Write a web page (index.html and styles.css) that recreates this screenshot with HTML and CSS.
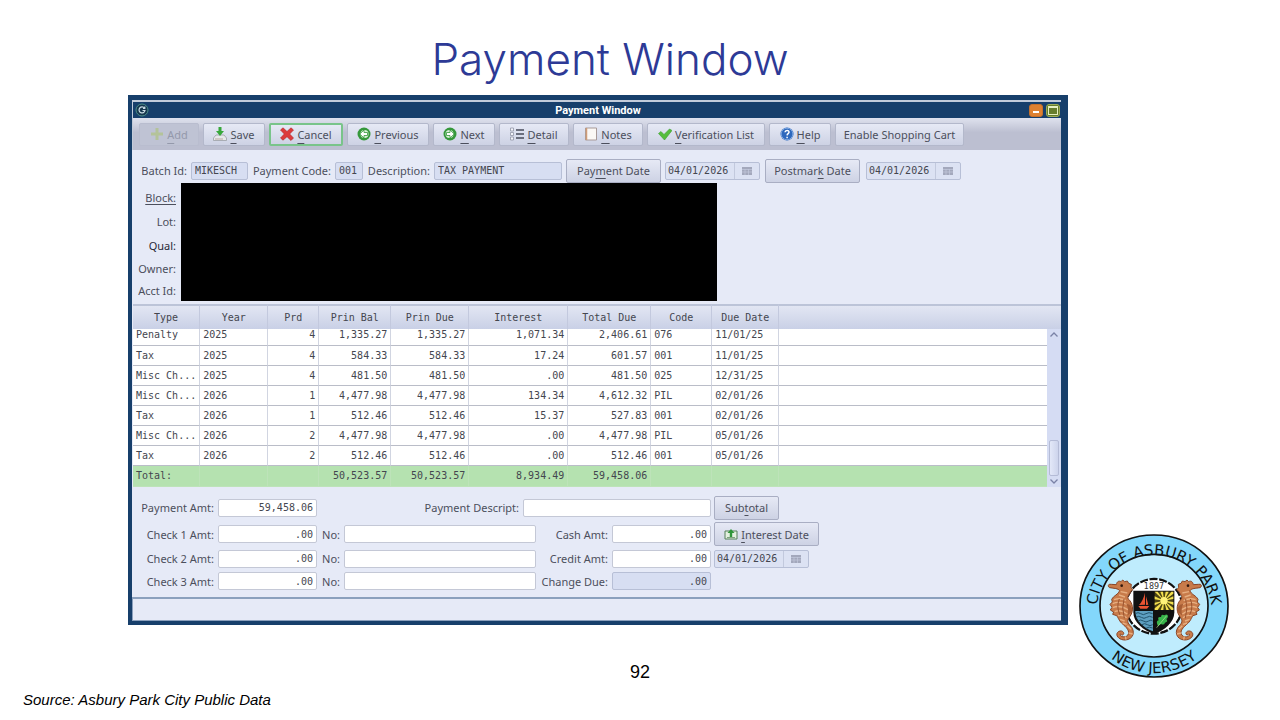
FILE: index.html
```
<!DOCTYPE html>
<html lang="en">
<head>
    <meta charset="UTF-8">
    <meta name="viewport" content="width=device-width, initial-scale=1.0">
    <title>Payment Window</title>
    <link rel="stylesheet" href="styles.css">
</head>
<body>
    <div class="slide">
        <h1 class="slide-title">Payment Window</h1>

        <main class="window">
            <div class="title-bar">
                <svg class="app-icon" viewBox="0 0 14 14">
                    <circle cx="7" cy="7" r="6" fill="#17384f" stroke="#4d8f88"/>
                    <path d="M9.5 5.2A3 3 0 1 0 10 7.5H7.5M9.8 3.5V5.5H8" fill="none" stroke="#c9dce4" stroke-width="1.2"/>
                </svg>
                <h2>Payment Window</h2>
                <div class="window-buttons">
                    <button class="minimize" aria-label="Minimize"></button>
                    <button class="maximize" aria-label="Maximize"></button>
                </div>
            </div>

            <div class="toolbar">
                <button class="tool tool-add" disabled>
                    <svg viewBox="0 0 14 14"><path d="M5.5 1h3v4.5H13v3H8.500V13h-3V8.500H1v-3h4.500z" fill="#b4c39a"/></svg>
                    <span><u>A</u>dd</span>
                </button>
                <button class="tool tool-short">
                    <svg viewBox="0 0 14 14"><path d="M3 8h8l2.500 3v2.500H.5V11z" fill="#e6e8ea" stroke="#9a9ea5" stroke-width=".8"/><path d="M2 12h8" stroke="#b9a7a0"/><path d="M5.500 0h3v4H11L7 9 3 4h2.500z" fill="#37a83a"/></svg>
                    <span><u>S</u>ave</span>
                </button>
                <button class="tool tool-cancel">
                    <svg viewBox="0 0 14 14"><path d="M3 .8 7 4.500 11 .8 13.500 3 9.700 7l3.800 4-2.500 2.500L7 9.700l-4 3.500L.5 11l3.800-4L.5 3z" fill="#dc3a3c" stroke="#b32428" stroke-width=".6"/></svg>
                    <span><u>C</u>ancel</span>
                </button>
                <button class="tool tool-previous">
                    <svg viewBox="0 0 14 14"><circle cx="7" cy="7" r="6.500" fill="#35983b"/><circle cx="7.500" cy="7" r="4" fill="#d9f0d7"/><path d="M2.800 7 7 3v2.500h3.500v3H7V11z" fill="#fff" stroke="#35983b" stroke-width=".8"/></svg>
                    <span><u>P</u>revious</span>
                </button>
                <button class="tool tool-short">
                    <svg viewBox="0 0 14 14"><circle cx="7" cy="7" r="6.500" fill="#35983b"/><circle cx="6.500" cy="7" r="4" fill="#d9f0d7"/><path d="M11.200 7 7 3v2.500H3.500v3H7V11z" fill="#fff" stroke="#35983b" stroke-width=".8"/></svg>
                    <span><u>N</u>ext</span>
                </button>
                <button class="tool tool-medium">
                    <svg viewBox="0 0 14 14"><path d="M.5 1h3v3h-3zM.5 5.500h3v3h-3zM.5 10h3v3h-3z" fill="#f4f5fa" stroke="#9296a6" stroke-width=".8"/><path d="M6 3h8M6 7h8M6 11h8" stroke="#474b59" stroke-width="1.300"/></svg>
                    <span><u>D</u>etail</span>
                </button>
                <button class="tool tool-medium">
                    <svg viewBox="0 0 14 14"><path d="M1.500 1h11v12h-11z" fill="#fbf8f5" stroke="#a89a98"/><path d="M2.500 1v12" stroke="#cf9c78" stroke-width="1.500"/></svg>
                    <span><u>N</u>otes</span>
                </button>
                <button class="tool tool-verify">
                    <svg viewBox="0 0 14 14"><path d="M.5 6.500 3 4.500l3 3L11.500 2 14 3.500 6.500 13z" fill="#55bd3d" stroke="#3b9e33" stroke-width=".6"/></svg>
                    <span><u>V</u>erification List</span>
                </button>
                <button class="tool tool-short">
                    <svg viewBox="0 0 14 14"><circle cx="7" cy="7" r="6.500" fill="#2d68bd"/><circle cx="7" cy="7" r="5.800" fill="none" stroke="#7ba6e0"/><path d="M5 5.300C5.200 2.700 9.400 3 9 5.400 8.800 6.700 7.200 6.700 7.100 8.400M7.100 9.700v1.500" fill="none" stroke="#fff" stroke-width="1.500"/></svg>
                    <span><u>H</u>elp</span>
                </button>
                <button class="tool tool-cart">Enable Shopping Cart</button>
            </div>

            <div class="batch">
                <label for="batch-id">Batch Id:</label>
                <input id="batch-id" class="readonly" value="MIKESCH" readonly>
                <label for="payment-code">Payment Code:</label>
                <input id="payment-code" class="readonly" value="001" readonly>
                <label for="description">Description:</label>
                <input id="description" class="readonly" value="TAX PAYMENT" readonly>
                <button class="action"><span>Pay<u>m</u>ent Date</span></button>
                <div class="date-field">
                    <input aria-label="Payment date" value="04/01/2026" readonly>
                    <button aria-label="Pick payment date"><svg viewBox="0 0 10 8"><path d="M0 0h10v8H0z" fill="#a3a8bc"/><path d="M0 2.500h10M0 5h10M3 2v6M6.500 2v6" stroke="#c3c9dc" stroke-width=".7"/></svg></button>
                </div>
                <button class="action"><span>Postmar<u>k</u> Date</span></button>
                <div class="date-field">
                    <input aria-label="Postmark date" value="04/01/2026" readonly>
                    <button aria-label="Pick postmark date"><svg viewBox="0 0 10 8"><path d="M0 0h10v8H0z" fill="#a3a8bc"/><path d="M0 2.500h10M0 5h10M3 2v6M6.500 2v6" stroke="#c3c9dc" stroke-width=".7"/></svg></button>
                </div>
            </div>

            <div class="account">
                <div class="account-labels">
                    <span><a href="#">Block:</a></span>
                    <span>Lot:</span>
                    <span class="dark">Qual:</span>
                    <span>Owner:</span>
                    <span>Acct Id:</span>
                </div>
                <div class="redacted"></div>
            </div>

            <div class="charges">
                <table>
                    <colgroup>
                        <col class="col-type"><col class="col-year"><col class="col-prd"><col class="col-bal"><col class="col-due">
                        <col class="col-interest"><col class="col-total"><col class="col-code"><col class="col-date"><col>
                    </colgroup>
                    <thead>
                        <tr><th>Type</th><th>Year</th><th>Prd</th><th>Prin Bal</th><th>Prin Due</th><th>Interest</th><th>Total Due</th><th>Code</th><th>Due Date</th><th></th></tr>
                    </thead>
                    <tbody>
                        <tr><td>Penalty</td><td>2025</td><td class="num">4</td><td class="num">1,335.27</td><td class="num">1,335.27</td><td class="num">1,071.34</td><td class="num">2,406.61</td><td>076</td><td>11/01/25</td><td></td></tr>
                        <tr><td>Tax</td><td>2025</td><td class="num">4</td><td class="num">584.33</td><td class="num">584.33</td><td class="num">17.24</td><td class="num">601.57</td><td>001</td><td>11/01/25</td><td></td></tr>
                        <tr><td>Misc Ch...</td><td>2025</td><td class="num">4</td><td class="num">481.50</td><td class="num">481.50</td><td class="num">.00</td><td class="num">481.50</td><td>025</td><td>12/31/25</td><td></td></tr>
                        <tr><td>Misc Ch...</td><td>2026</td><td class="num">1</td><td class="num">4,477.98</td><td class="num">4,477.98</td><td class="num">134.34</td><td class="num">4,612.32</td><td>PIL</td><td>02/01/26</td><td></td></tr>
                        <tr><td>Tax</td><td>2026</td><td class="num">1</td><td class="num">512.46</td><td class="num">512.46</td><td class="num">15.37</td><td class="num">527.83</td><td>001</td><td>02/01/26</td><td></td></tr>
                        <tr><td>Misc Ch...</td><td>2026</td><td class="num">2</td><td class="num">4,477.98</td><td class="num">4,477.98</td><td class="num">.00</td><td class="num">4,477.98</td><td>PIL</td><td>05/01/26</td><td></td></tr>
                        <tr><td>Tax</td><td>2026</td><td class="num">2</td><td class="num">512.46</td><td class="num">512.46</td><td class="num">.00</td><td class="num">512.46</td><td>001</td><td>05/01/26</td><td></td></tr>
                    </tbody>
                    <tfoot>
                        <tr><td>Total:</td><td></td><td></td><td class="num">50,523.57</td><td class="num">50,523.57</td><td class="num">8,934.49</td><td class="num">59,458.06</td><td></td><td></td><td></td></tr>
                    </tfoot>
                </table>
                <div class="scrollbar">
                    <div class="scroll-head"></div>
                    <svg viewBox="0 0 8 5"><path d="M.5 4.500 4 1l3.500 3.500" fill="none" stroke="#7a82a6" stroke-width="1.300"/></svg>
                    <div class="scroll-thumb"></div>
                    <svg viewBox="0 0 8 5"><path d="M.5.5 4 4 7.500.5" fill="none" stroke="#7a82a6" stroke-width="1.300"/></svg>
                </div>
            </div>

            <div class="payment">
                <label for="payment-amt">Payment Amt:</label>
                <input id="payment-amt" class="num" value="59,458.06">
                <div class="descript">
                    <label for="payment-descript">Payment Descript:</label>
                    <input id="payment-descript">
                </div>
                <button class="action subtotal"><span>Sub<u>t</u>otal</span></button>

                <label for="check1">Check 1 Amt:</label>
                <input id="check1" class="num" value=".00">
                <label for="check1-no">No:</label>
                <input id="check1-no">
                <label for="cash">Cash Amt:</label>
                <input id="cash" class="num" value=".00">
                <button class="action interest">
                    <svg viewBox="0 0 14 12"><path d="M1 3h12v8H1z" fill="#e4efe0" stroke="#55805a"/><path d="M3 9.500h8" stroke="#7ea37f"/><path d="M5.800 9V5H3.500L7 1l3.500 4H8.200v4z" fill="#2f963a"/></svg>
                    <span><u>I</u>nterest Date</span>
                </button>

                <label for="check2">Check 2 Amt:</label>
                <input id="check2" class="num" value=".00">
                <label for="check2-no">No:</label>
                <input id="check2-no">
                <label for="credit">Credit Amt:</label>
                <input id="credit" class="num" value=".00">
                <div class="date-field">
                    <input aria-label="Interest date" value="04/01/2026" readonly>
                    <button aria-label="Pick interest date"><svg viewBox="0 0 10 8"><path d="M0 0h10v8H0z" fill="#a3a8bc"/><path d="M0 2.500h10M0 5h10M3 2v6M6.500 2v6" stroke="#c3c9dc" stroke-width=".7"/></svg></button>
                </div>

                <label for="check3">Check 3 Amt:</label>
                <input id="check3" class="num" value=".00">
                <label for="check3-no">No:</label>
                <input id="check3-no">
                <label for="change">Change Due:</label>
                <input id="change" class="num readonly" value=".00" readonly>
            </div>

            <div class="status-bar"></div>
        </main>

        <svg class="seal" viewBox="27 17 450 432" role="img" aria-label="City of Asbury Park seal">
            <defs>
                <path id="arc-top" d="M86 290A172 166 0 1 1 418 290"/>
                <path id="arc-bottom" d="M44 233A208 201 0 0 0 460 233"/>
                <g id="seahorse">
                    <path d="M115 171Q116 166 124 168L139 169C141 158 148 157 153 160L158 155 164 160 172 158 176 165 184 168 183 177 188 184 182 190C179 198 171 203 174 211C188 222 193 246 180 264C172 274 170 281 180 291C198 308 191 334 165 335C143 335 133 316 147 309C158 304 166 316 158 320C153 320 154 315 151 317C149 324 160 328 169 324C183 315 174 301 160 289C147 279 145 268 140 262L128 258 131 251 121 245 126 237 120 228 127 221 125 213C129 203 147 197 149 187C145 180 132 180 119 178Q114 176 115 171Z" fill="#c87b4a" stroke="#8a4526" stroke-width="3"/>
                    <path d="M132 214Q150 207 168 217M128 226Q148 217 174 230M128 238Q150 229 174 244M134 250Q152 242 172 257M144 262Q158 258 170 268M150 273 164 278M158 284 170 288M172 292 183 303M176 314 188 317M166 324 168 334M147 200 165 206M152 190 172 194" fill="none" stroke="#e7ae80" stroke-width="4"/>
                    <path d="M148 212Q138 236 150 260M162 212Q154 238 163 270" fill="none" stroke="#9b5430" stroke-width="3"/>
                    <path d="M169 226Q188 228 186 250L172 262Q178 244 169 226Z" fill="#a65d34"/>
                    <circle cx="155" cy="172" r="4" fill="#33180e"/>
                </g>
            </defs>
            <ellipse cx="252" cy="233" rx="222" ry="213" fill="#83d7fb" stroke="#111" stroke-width="5"/>
            <ellipse cx="252" cy="232" rx="162" ry="154" fill="#bfecfd" stroke="#111" stroke-width="5"/>
            <text class="seal-text"><textPath href="#arc-top" startOffset="50%">CITY OF ASBURY PARK</textPath></text>
            <text class="seal-text"><textPath href="#arc-bottom" startOffset="50%">NEW JERSEY</textPath></text>
            <ellipse cx="252" cy="234" rx="84" ry="82" fill="#fff" stroke="#111" stroke-width="7" stroke-dasharray="24 5"/>
            <ellipse cx="252" cy="234" rx="80" ry="78" fill="#fff"/>
            <text class="seal-year" x="252" y="181">1897</text>
            <path d="M190 187H313V252C313 282 284 307 252 317C220 307 190 282 190 252Z" fill="#111"/>
            <path d="M196 248H249V309C221 299 197 277 196 250Z" fill="#5e9fc0"/>
            <path d="M196 256Q204 250 212 256T228 256T248 256M198 267Q206 261 214 267T230 267T248 267M204 278Q212 272 220 278T236 278T248 278M216 289Q224 283 232 289T248 289M229 299Q237 294 248 299" fill="none" stroke="#24556e" stroke-width="3"/>
            <path d="M225 193V229L207 230Q220 216 225 193ZM228 204L235 229 228 230ZM205 233H238L231 241H211Z" fill="#e85332"/>
            <path d="M254 190H310V245H254Z" fill="#4a4315"/>
            <path d="M282 217 254 190H263ZM282 217 271 190H279ZM282 217 287 190H296ZM282 217 304 190H310V196ZM282 217 310 204V212ZM282 217 310 221V230ZM282 217 310 239V245H304ZM282 217 297 245H289ZM282 217 280 245H272ZM282 217 263 245H254V240ZM282 217 254 231V223ZM282 217 254 213V204Z" fill="#f3df4e"/>
            <circle cx="282" cy="217" r="11" fill="#fff27a"/>
            <path d="M264 293Q256 278 266 276 261 264 273 266 274 255 283 261 293 254 294 265 292 270 289 272 296 280 285 283 282 292 273 287Z" fill="#37b44a"/>
            <path d="M260 298 290 262" stroke="#bce59d" stroke-width="2"/>
            <use href="#seahorse"/>
            <use href="#seahorse" transform="translate(509 0) scale(-1 1)"/>
        </svg>

        <footer class="slide-footer">
            <div class="page-number">92</div>
            <div class="source">Source: Asbury Park City Public Data</div>
        </footer>
    </div>
</body>
</html>
```
FILE: styles.css
```
* {
    box-sizing: border-box;
}

body {
    margin: 0;
    background-color: #fff;
    font-family: "Liberation Sans", Arial, sans-serif;
    color: #000;
}

.slide {
    display: grid;
    grid-template-columns: 128px 1fr 212px;
    grid-template-rows: 95px auto 95px;
    min-height: 100vh;
}

.slide-title {
    grid-column: 1 / -1;
    margin: 0;
    padding: 31px 60px 0 0;
    text-align: center;
    font-family: Inter, sans-serif;
    font-weight: 300;
    font-size: 44px;
    line-height: 56px;
    color: #2d3a96;
}

/* application window */
.window {
    grid-column: 2;
    grid-row: 2;
    border: solid #173f6b;
    border-width: 5px 7px 4px 4px;
    background-color: #e6eaf7;
    font-family: "Noto Sans", "Open Sans", sans-serif;
    font-size: 11px;
    color: #4c4f5c;
    display: flex;
    flex-direction: column;
}

.window button,
.window input {
    font-family: inherit;
    font-size: inherit;
    color: inherit;
    margin: 0;
    padding: 0;
}

.title-bar {
    display: flex;
    align-items: center;
    justify-content: space-between;
    height: 18px;
    border-top: 2px solid #c3ccda;
    border-left: 1px solid #c3ccda;
    padding: 0 1px 0 2px;
    background-color: #173f6b;
    color: #fff;
}

.title-bar h2 {
    margin: 0;
    font-family: Roboto, sans-serif;
    font-size: 11px;
    font-weight: bold;
}

.app-icon {
    width: 14px;
    height: 14px;
    margin-right: 18px;
}

.window-buttons {
    display: flex;
    gap: 3px;
}

.window-buttons button {
    width: 14px;
    height: 13px;
    border: 1px solid #c5702b;
    border-radius: 3px;
    background-color: #df8130;
    display: flex;
    align-items: center;
    justify-content: center;
}

.window-buttons .maximize {
    border-color: #9cab55;
    background-color: #667d2b;
}

.minimize::before {
    content: "";
    width: 6px;
    height: 2px;
    margin-top: 4px;
    background-color: #fff;
}

.maximize::before {
    content: "";
    width: 8px;
    height: 6px;
    border: 1px solid #e6efc0;
    border-top-width: 2px;
}

.toolbar {
    display: flex;
    align-items: center;
    gap: 4px;
    height: 32px;
    padding: 0 6px;
    border-left: 1px solid #c3ccda;
    background: linear-gradient(#dfe2ee, #bcbfd1 45%, #bcbfd1);
}

.tool,
.action {
    display: flex;
    align-items: center;
    justify-content: center;
    border: 1px solid #b3b8cb;
    border-radius: 2px;
    background: linear-gradient(#e6e9f5, #cdd2e4);
    white-space: nowrap;
}

.tool {
    height: 23px;
    gap: 3px;
}

.tool svg {
    width: 14px;
    height: 14px;
}

.window u {
    text-decoration-thickness: 1px;
    text-underline-offset: 4px;
}

.window .action u {
    text-underline-offset: 3px;
}

.window .tool-add {
    width: 60px;
    border-color: #b9bdcf;
    background: #bfc3d4;
    color: #9499ab;
}

.tool-short {
    width: 62px;
}

.tool-medium {
    width: 70px;
}

.tool-cancel {
    width: 74px;
    border: 2px solid #79c48a;
}

.tool-previous {
    width: 82px;
}

.tool-verify {
    width: 118px;
}

.tool-cart {
    width: 129px;
}

.window input {
    width: 100%;
    height: 18px;
    padding: 0 3px;
    border: 1px solid #c4c8d6;
    border-radius: 2px;
    background-color: #fff;
    font-family: "DejaVu Sans Mono", monospace;
    font-size: 10px;
    color: #44464f;
}

.window input.readonly {
    background-color: #d7def2;
    border-color: #b7bfd6;
}

.window label {
    text-align: right;
    padding-right: 4px;
    white-space: nowrap;
}

.num {
    text-align: right;
}

.action {
    height: 24px;
    gap: 3px;
    border-color: #a9aec3;
}

.date-field {
    display: flex;
    width: 95px;
    height: 18px;
    border: 1px solid #b7bfd6;
    border-radius: 2px;
    background-color: #dce2f3;
}

.window .date-field input {
    height: 16px;
    padding: 0 2px;
    border: 0;
    background: none;
    flex: 1;
    min-width: 0;
}

.date-field button {
    width: 25px;
    border: 0;
    border-left: 1px solid #c2c9dd;
    background: none;
    display: flex;
    align-items: center;
    justify-content: center;
}

.date-field svg {
    width: 10px;
    height: 8px;
}

.batch {
    display: grid;
    grid-template-columns: 59px 57px 87px 28px 71px 128px 95px 95px 97px 95px;
    align-items: center;
    padding-top: 8px;
    height: 33px;
}

.batch .action {
    margin-left: 4px;
    width: 95px;
}

.batch .date-field {
    margin-left: 8px;
}

.batch .action ~ .action {
    margin-left: 13px;
}

.batch .date-field ~ .date-field {
    margin-left: 17px;
}

.account {
    display: grid;
    grid-template-columns: 49px 536px;
    height: 118px;
}

.account-labels {
    display: grid;
    grid-template-rows: 24px 24px 24px 22px 22px;
    align-items: center;
    align-content: end;
    padding-right: 5px;
    text-align: right;
    white-space: nowrap;
}

.account-labels span {
    justify-self: end;
}

.account-labels a {
    color: inherit;
    text-underline-offset: 2px;
}

.dark {
    color: #262838;
}

.redacted {
    background-color: #000;
}

/* charges grid */
.charges {
    display: flex;
    margin: 3px 0 0 1px;
}

.charges table {
    flex: 1;
    table-layout: fixed;
    border-collapse: separate;
    border-spacing: 0;
    font-family: "DejaVu Sans Mono", monospace;
    font-size: 10px;
    line-height: 12px;
    color: #44464f;
}

.charges th {
    height: 25px;
    padding: 0;
    border-top: 2px solid #bcc4d8;
    border-right: 1px solid #c3c9de;
    background: linear-gradient(#e2e6f3, #c9d0e6);
    font-weight: normal;
}

.charges td {
    height: 20px;
    padding: 0 3px;
    border-right: 1px solid #d1d5e1;
    border-bottom: 1px solid #babdc8;
    background-color: #fff;
    white-space: nowrap;
    overflow: hidden;
}

/* the top row is partly scrolled under the header */
.charges tbody tr:first-child td {
    height: 17px;
    padding-bottom: 4px;
}

.charges th:last-child,
.charges td:last-child {
    border-right: 0;
}

.charges tfoot td {
    height: 21px;
    border-color: #bde3b9;
    background-color: #b5e2b0;
}

.col-type {
    width: 67px;
}

.col-year {
    width: 68px;
}

.col-prd {
    width: 51px;
}

.col-bal {
    width: 72px;
}

.col-due {
    width: 78px;
}

.col-interest {
    width: 99px;
}

.col-total {
    width: 83px;
}

.col-code {
    width: 61px;
}

.col-date {
    width: 67px;
}

.scrollbar {
    width: 14px;
    display: flex;
    flex-direction: column;
    align-items: center;
    background-color: #d5dcf3;
}

.scrollbar svg {
    width: 8px;
    height: 5px;
    margin: 3px 0;
}

.scroll-head {
    width: 100%;
    height: 25px;
    border-top: 2px solid #bcc4d8;
    background: linear-gradient(#e2e6f3, #c9d0e6);
}

.scroll-thumb {
    width: 10px;
    height: 36px;
    margin-top: auto;
    border: 1px solid #b4bbd6;
    border-radius: 2px;
    background: linear-gradient(90deg, #e3e8f8, #cdd4ec);
}

/* payment entry */
.payment {
    display: grid;
    grid-template-columns: 86px 99px 27px 192px 76px 99px 107px;
    grid-template-rows: 27px 26px 23px 22px;
    align-items: center;
    padding: 7px 0 5px;
}

.descript {
    grid-column: 3 / 7;
    display: flex;
    align-items: center;
    justify-content: flex-end;
}

.window .descript input {
    width: 188px;
}

.payment .action,
.payment .date-field {
    margin-left: 3px;
}

.subtotal {
    width: 65px;
}

.interest {
    width: 105px;
}

.interest svg {
    width: 14px;
    height: 12px;
}

.status-bar {
    height: 24px;
    border: 1px solid #8ba0bd;
    border-top-width: 2px;
    border-right: 0;
}

.seal {
    grid-column: 3;
    grid-row: 2 / 4;
    align-self: end;
    width: 150px;
    height: 144px;
    margin: 0 0 42px 11px;
}

.seal-text {
    font-family: "DejaVu Sans", sans-serif;
    font-size: 45px;
    text-anchor: middle;
    fill: #111;
}

.seal-year {
    font-family: "DejaVu Sans", sans-serif;
    font-size: 24px;
    text-anchor: middle;
    fill: #333;
}

.slide-footer {
    grid-column: 1 / -1;
    grid-row: 3;
    padding-top: 36px;
}

.page-number {
    text-align: center;
    font-size: 18px;
    line-height: 22px;
}

.source {
    margin-top: 7px;
    padding-left: 23px;
    font-size: 15px;
    font-style: italic;
    line-height: 20px;
}
```
